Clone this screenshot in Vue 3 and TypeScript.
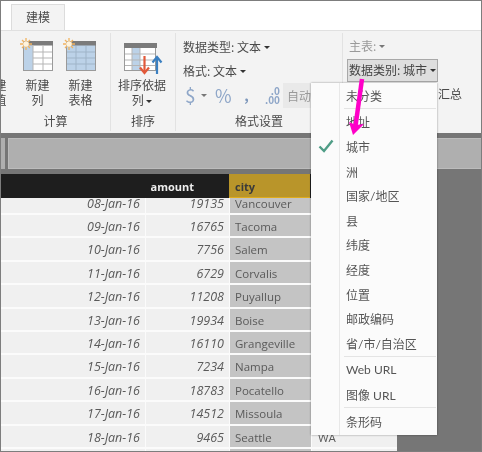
<script setup lang="ts">
const rows = [
  ['08-Jan-16', '19135', 'Vancouver', ''],
  ['09-Jan-16', '16765', 'Tacoma', ''],
  ['10-Jan-16', '7756', 'Salem', ''],
  ['11-Jan-16', '6729', 'Corvalis', ''],
  ['12-Jan-16', '11208', 'Puyallup', ''],
  ['13-Jan-16', '19934', 'Boise', ''],
  ['14-Jan-16', '16110', 'Grangeville', ''],
  ['15-Jan-16', '7234', 'Nampa', ''],
  ['16-Jan-16', '18783', 'Pocatello', ''],
  ['17-Jan-16', '14512', 'Missoula', ''],
  ['18-Jan-16', '9465', 'Seattle', 'WA'],
]
type Item = { label: string; check?: boolean; sep?: boolean }
const menu: Item[] = [
  { label: '未分类', sep: true },
  { label: '地址' },
  { label: '城市', check: true },
  { label: '洲' },
  { label: '国家/地区' },
  { label: '县' },
  { label: '纬度' },
  { label: '经度' },
  { label: '位置' },
  { label: '邮政编码' },
  { label: '省/市/自治区', sep: true },
  { label: 'Web URL' },
  { label: '图像 URL', sep: true },
  { label: '条形码' },
]
</script>

<template>
  <div class="frame">
    <div class="tabs"><div class="tab">建模</div></div>
    <div class="ribbon">
      <section class="group calc">
        <div class="tools">
          <div class="tool clipped"><span class="icon-gap"></span><span>新建<br />量值</span></div>
          <div class="tool">
            <svg class="ico" width="34" height="34" viewBox="0 0 34 34">
              <rect x="2.500" y="4.500" width="29" height="29" fill="#fff" stroke="#9a9a9a" />
              <rect x="2" y="4" width="30" height="4.500" fill="#7b7b7b" />
              <rect x="3" y="9" width="9" height="24" fill="#bcd2e8" />
              <path d="M12 9V33M22 9V33M12 15H31M12 21H31M12 27H31" stroke="#b5b5b5" fill="none" />
              <g stroke="#f2b35f" stroke-width="1.300"><path d="M5 1V13M-1 7H11M1 3L9 11M9 3L1 11" /></g>
              <circle cx="5" cy="7" r="2.800" fill="#fff3dc" />
            </svg>
            <span>新建<br />列</span>
          </div>
          <div class="tool">
            <svg class="ico" width="34" height="34" viewBox="0 0 34 34">
              <rect x="2.500" y="4.500" width="29" height="29" fill="#bcd2e8" stroke="#9a9a9a" />
              <rect x="2" y="4" width="30" height="4.500" fill="#7b7b7b" />
              <path d="M12 9V33M22 9V33M3 15H31M3 21H31M3 27H31" stroke="#9fb4c8" fill="none" />
              <g stroke="#f2b35f" stroke-width="1.300"><path d="M5 1V13M-1 7H11M1 3L9 11M9 3L1 11" /></g>
              <circle cx="5" cy="7" r="2.800" fill="#fff3dc" />
            </svg>
            <span>新建<br />表格</span>
          </div>
        </div>
        <div class="glabel">计算</div>
      </section>
      <section class="group sort">
        <div class="tools">
          <div class="tool wide">
            <svg class="ico" width="38" height="34" viewBox="0 0 38 34">
              <rect x="1.500" y="6.500" width="31" height="27" fill="#fff" stroke="#9a9a9a" />
              <rect x="1" y="6" width="33" height="5" fill="#7b7b7b" />
              <rect x="9" y="11" width="8" height="22" fill="#bcd2e8" />
              <path d="M9 11V33M17 11V33M2 17H32M2 23H32M2 28.500H32" stroke="#b5b5b5" fill="none" />
              <path d="M21.500 19V36" stroke="#e2593a" stroke-width="2.200" fill="none" />
              <path d="M17 30.500L21.500 36L26 30.500" stroke="#e2593a" stroke-width="2.200" fill="none" />
              <path d="M34 37V20" stroke="#3a7fc0" stroke-width="2.200" fill="none" />
              <path d="M29.500 25.500L34 20L38.500 25.500" stroke="#3a7fc0" stroke-width="2.200" fill="none" />
            </svg>
            <span>排序依据<br />列 <i class="caret"></i></span>
          </div>
        </div>
        <div class="glabel">排序</div>
      </section>
      <section class="group format">
        <div class="stack">
          <div class="line">数据类型: 文本 <i class="caret"></i></div>
          <div class="line">格式: 文本 <i class="caret"></i></div>
          <div class="line symbols">
            <span class="sym">$</span><i class="caret grey"></i>
            <span class="sym pct">%</span>
            <span class="comma">,</span>
            <span class="dec">.0<br />.00</span>
            <span class="auto">自动</span>
          </div>
        </div>
        <div class="glabel">格式设置</div>
      </section>
      <section class="group props">
        <div class="stack">
          <div class="line muted">主表: <i class="caret grey"></i></div>
          <div class="line"><span class="picker">数据类别: 城市 <i class="caret"></i></span></div>
          <div class="line sum"><span>汇总</span></div>
        </div>
      </section>
    </div>
    <div class="darkbar"></div>
    <div class="band"><div class="band-left"></div><div class="band-main"></div></div>
    <div class="darkbar"></div>
    <div class="table">
      <div class="head">
        <div class="c1"></div>
        <div class="c2">amount</div>
        <div class="c3">city</div>
      </div>
      <div class="body">
        <div v-for="r in rows" :key="r[0]" class="row">
          <div class="c1 cell">{{ r[0] }}</div>
          <div class="c2 cell">{{ r[1] }}</div>
          <div class="c3 cell">{{ r[2] }}</div>
          <div class="c4 cell">{{ r[3] }}</div>
        </div>
        <div class="row tail"><div class="c1 cell"></div><div class="c2 cell"></div><div class="c3 cell"></div><div class="c4 cell"></div></div>
      </div>
    </div>

    <div class="menu">
      <div v-for="m in menu" :key="m.label" class="mi" :class="{ sep: m.sep }">
        <span class="gutter">
          <svg v-if="m.check" width="16" height="14" viewBox="0 0 16 14"><path d="M1.500 7.500L6 12L14.500 1.500" fill="none" stroke="#4f9d86" stroke-width="2.400" /></svg>
        </span>
        <span class="ml">{{ m.label }}</span>
      </div>
    </div>
    <svg class="arrow" width="24" height="60" viewBox="0 0 24 60">
      <path d="M16 1L9.500 48" stroke="#ff00c8" stroke-width="4.500" fill="none" />
      <path d="M3 44L7 57L18 46L10 47Z" fill="#ff00c8" />
    </svg>
  </div>
</template>

<style scoped>
.frame {
  position: relative;
  width: 482px;
  height: 452px;
  box-sizing: border-box;
  overflow: hidden;
  border: 1px solid #7d7d7d;
  background: #767676;
  font-family: "Noto Sans CJK SC", "Noto Sans", sans-serif;
  font-size: 12px;
  color: #4a4a4a;
  filter: blur(0.35px);
}
.tabs { height: 29px; background: #fff; border-bottom: 1px solid #e0e0e0; position: relative; }
.tab {
  position: absolute; left: 10px; top: 3px; width: 54px; height: 26px; box-sizing: border-box;
  background: #f3f3f3; border: 1px solid #dcdcdc; border-bottom: 0; text-align: center; line-height: 24px; font-size: 12px;
}
.ribbon { display: flex; height: 102px; background: #f3f3f3; }
.group { display: flex; flex-direction: column; border-right: 1px solid #e2e2e2; margin: 2px 0; height: 98px; box-sizing: border-box; }
.calc { width: 110px; overflow: hidden; }
.sort { width: 65px; }
.format { width: 167px; }
.props { width: 130px; border-right: 0; }
.tools { display: flex; flex: 1; justify-content: flex-end; }
.tool { width: 43px; display: flex; flex-direction: column; align-items: center; text-align: center; line-height: 15px; padding-top: 4px; flex: none; }
.tool.wide { width: 62px; }
.sort .tools { justify-content: flex-start; }
.icon-gap { height: 40px; }
.ico { display: block; margin-bottom: 6px; overflow: visible; }
.calc .tools { padding-right: 8px; margin-left: -23px; }
.glabel { text-align: center; line-height: 16px; padding-bottom: 2px; }
.stack { flex: 1; display: flex; flex-direction: column; padding: 2px 0 0 7px; }
.line { height: 24px; line-height: 24px; white-space: nowrap; display: flex; align-items: center; gap: 3px; }
.caret { display: inline-block; width: 0; height: 0; border: 3px solid transparent; border-top: 3px solid #333; border-bottom: 0; vertical-align: middle; }
.caret.grey { border-top-color: #777; }
.symbols { gap: 0; }
.sym { flex: none; font-size: 19px; color: #8ea6c8; width: 14px; margin-left: 2px; }
.symbols .caret { flex: none; margin: 0 8px 0 2px; }
.sym.pct { width: 22px; margin-left: 0; font-size: 18px; }
.comma { flex: none; width: 19px; color: #7d97bb; font-weight: 700; font-size: 14px; text-align: center; }
.dec { flex: none; width: 24px; font-size: 10px; line-height: 9px; color: #8ea6c8; text-align: right; font-weight: 700; }
.auto { margin-left: 3px; flex: none; width: 32px; box-sizing: border-box; height: 25px; line-height: 25px; background: #e9e9e9; color: #999; padding-left: 4px; }
.props .stack { padding: 1px 0 0 6px; }
.muted { color: #9a9a9a; }
.picker { display: inline-flex; align-items: center; gap: 3px; width: 91px; box-sizing: border-box; margin-left: -2px; height: 23px; padding: 0 1px; border: 1px solid #a8a8a8; background: #dedede; color: #444; }
.sum { padding-left: 89px; }
.darkbar { height: 5px; background: #767676; }
.band { display: flex; height: 31px; gap: 3px; background: #767676; }
.band-left { width: 4px; background: #afafaf; }
.band-main { flex: 1; background: #afafaf; border: 1px solid #bcbcbc; border-right: 0; }
.table { width: 396px; font-family: "Open Sans", "Noto Sans", sans-serif; }
.head { display: flex; height: 24px; background: #1e1e1e; color: #eee; font-weight: 700; font-size: 11px; line-height: 25px; }
.head .c2 { text-align: right; padding-right: 35px; }
.head .c3 { background: #b9952a; color: #3a3a3a; padding-left: 6px; border-bottom: 1px solid #e0ac1c; }
.c1 { width: 144px; box-sizing: border-box; flex: none; }
.c2 { width: 84px; box-sizing: border-box; flex: none; }
.c3 { width: 81px; box-sizing: border-box; flex: none; }
.c4 { flex: 1; }
.body { height: 300px; overflow: hidden; background: #fff; }
.row { display: flex; height: 23.4px; box-sizing: border-box; padding-bottom: 2px; background: #fbfbfb; font-size: 12.500px; line-height: 23px; }
.row:first-child { height: 17px; line-height: 11px; }
.cell { background: #f0f0f0; color: #5a5a5a; white-space: nowrap; }
.c1.cell { margin-right: 1px; width: 144px; text-align: right; padding-right: 5px; font-style: italic; }
.c2.cell { width: 83px; text-align: right; padding-right: 5px; font-style: italic; margin-right: 1px; }
.c3.cell { background: #c4c4c4; padding-left: 5px; margin-right: 1px; font-size: 11.500px; }
.c4.cell { padding-left: 6px; font-size: 11.500px; }
.menu {
  position: absolute; left: 310px; top: 82px; width: 126px; height: 352px; box-sizing: border-box;
  background: #fbfbfb; box-shadow: 0 0 2px rgba(0,0,0,.4);
  font-family: Lato, "Noto Sans CJK SC", sans-serif;
}
.menu::before { content: ""; position: absolute; left: 28px; top: 0; bottom: 0; width: 1px; background: #e8e8e8; }
.mi { display: flex; align-items: center; height: 24.6px; position: relative; }
.mi.sep { height: 26.6px; padding-bottom: 2px; box-sizing: border-box; }
.mi.sep::after { content: ""; position: absolute; left: 33px; right: 1px; bottom: 1px; height: 1px; background: #e4e4e4; }
.gutter { width: 29px; flex: none; display: flex; justify-content: center; }
.ml { padding-left: 6px; color: #555; }
.arrow { position: absolute; left: 345px; top: 77px; overflow: visible; }
</style>
